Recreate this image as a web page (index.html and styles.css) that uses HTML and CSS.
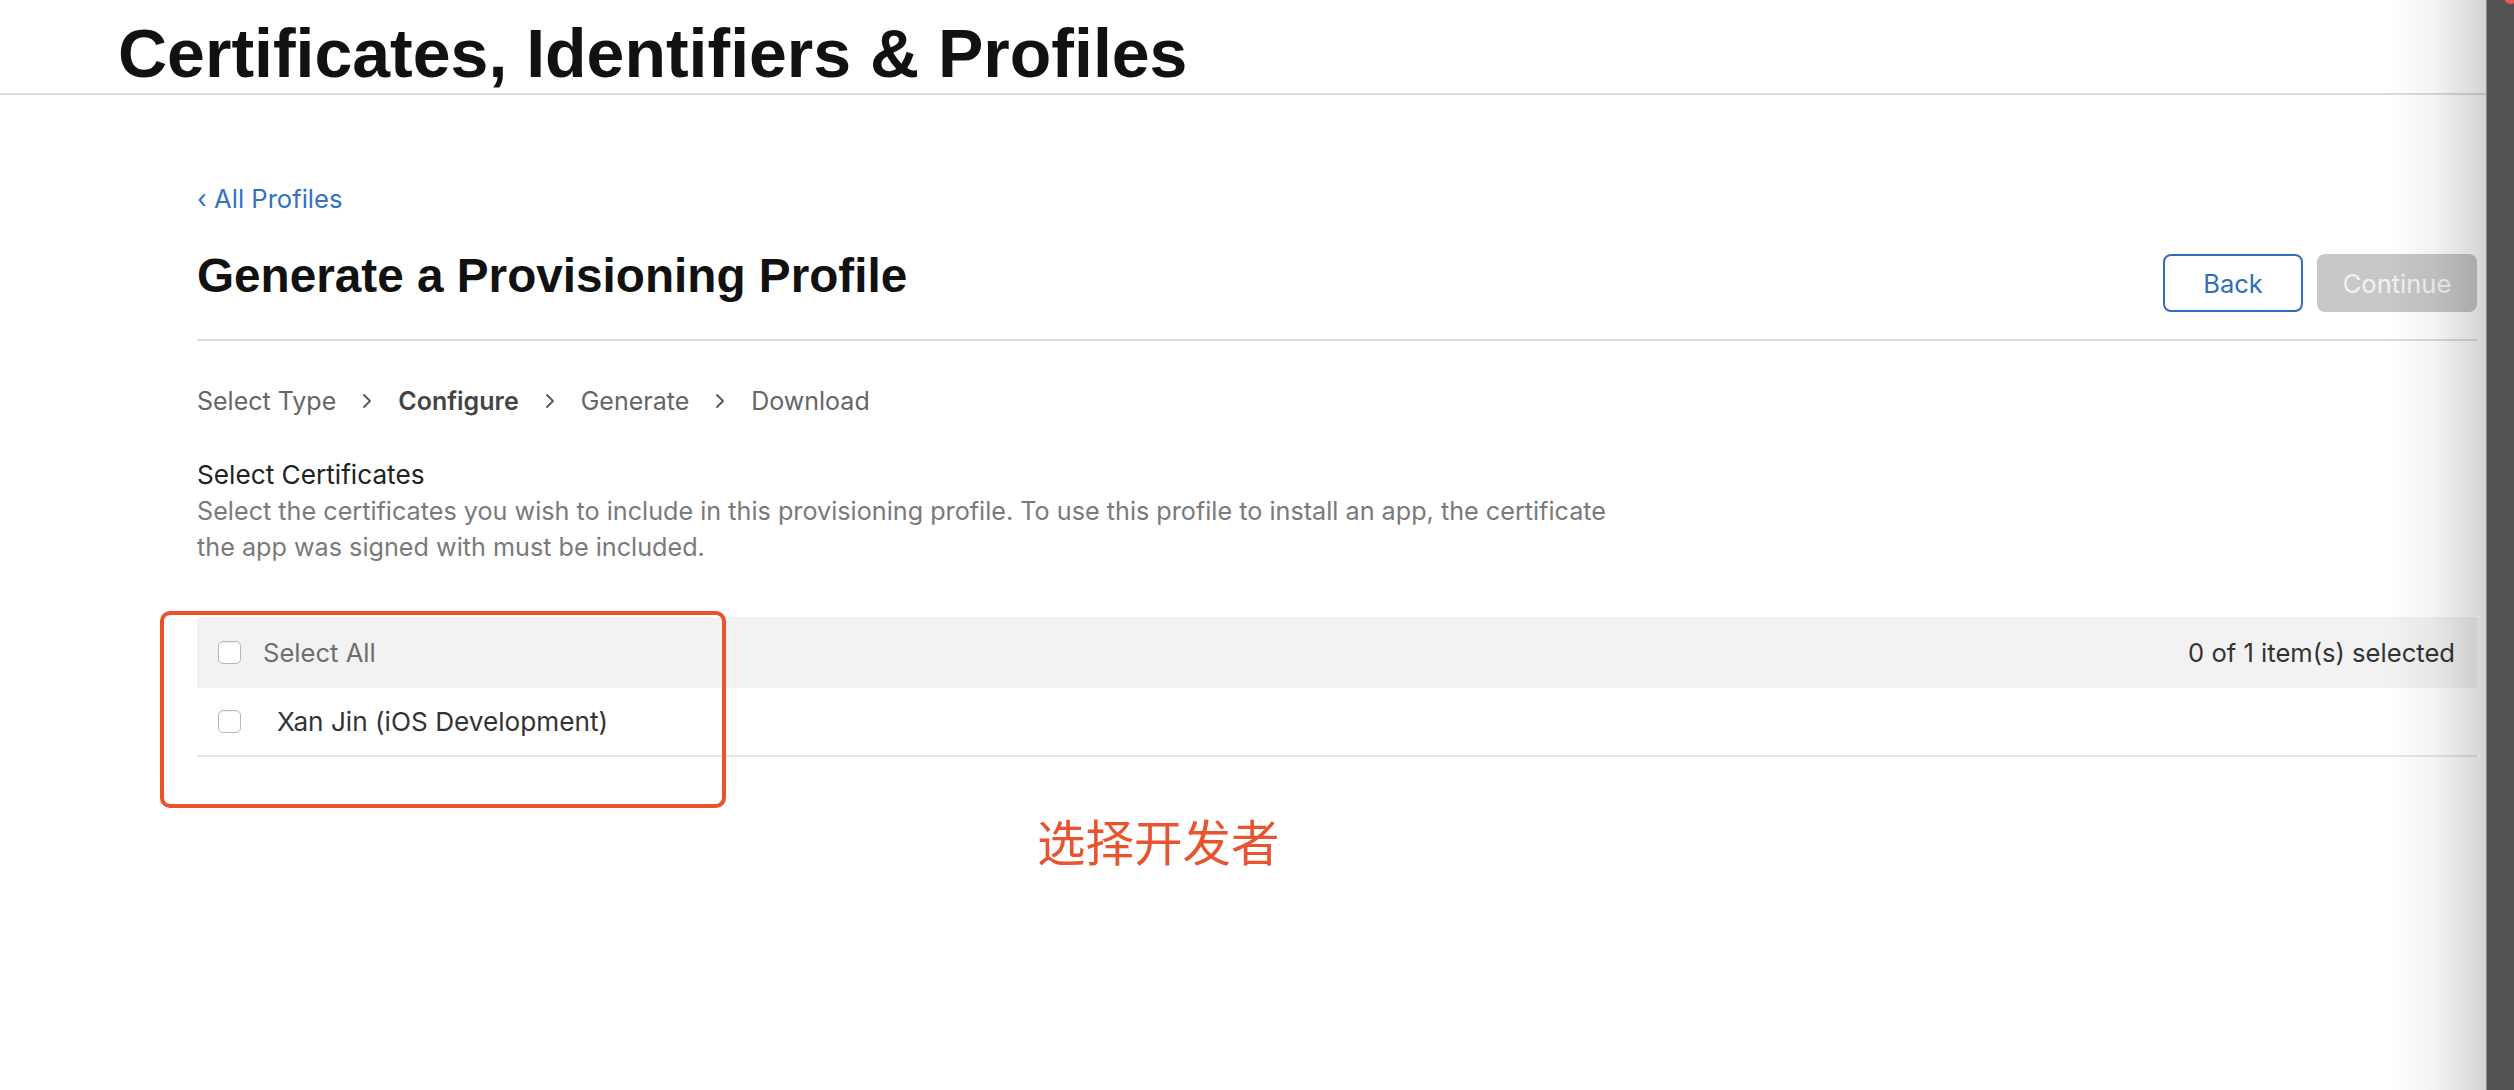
FILE: index.html
```html
<!DOCTYPE html>
<html lang="en">
<head>
<meta charset="utf-8">
<title>Certificates, Identifiers &amp; Profiles</title>
<link rel="stylesheet" href="styles.css">
</head>
<body>
<div class="window">
  <main class="page">
    <header class="site-head">
      <h1 class="site-title">Certificates, Identifiers &amp; Profiles</h1>
    </header>
    <section class="content">
      <a class="back-link" href="#">‹ All Profiles</a>
      <div class="title-row">
        <h2 class="page-title">Generate a Provisioning Profile</h2>
        <div class="actions">
          <button class="btn btn-back">Back</button>
          <button class="btn btn-continue">Continue</button>
        </div>
      </div>
      <nav class="steps">
        <span class="step">Select Type</span>
        <svg class="chev" viewBox="0 0 10 16" width="10" height="16"><path d="M2 2 L8 8 L2 14" fill="none" stroke="#555" stroke-width="1.8" stroke-linecap="round" stroke-linejoin="round"/></svg>
        <span class="step step-current">Configure</span>
        <svg class="chev" viewBox="0 0 10 16" width="10" height="16"><path d="M2 2 L8 8 L2 14" fill="none" stroke="#555" stroke-width="1.8" stroke-linecap="round" stroke-linejoin="round"/></svg>
        <span class="step">Generate</span>
        <svg class="chev" viewBox="0 0 10 16" width="10" height="16"><path d="M2 2 L8 8 L2 14" fill="none" stroke="#555" stroke-width="1.8" stroke-linecap="round" stroke-linejoin="round"/></svg>
        <span class="step">Download</span>
      </nav>
      <div class="section-head">
        <div class="section-title">Select Certificates</div>
        <p class="section-desc">Select the certificates you wish to include in this provisioning profile. To use this profile to install an app, the certificate the app was signed with must be included.</p>
      </div>
      <div class="cert-table">
        <div class="table-head">
          <label class="check-label select-all"><span class="checkbox"></span><span>Select All</span></label>
          <span class="count">0 of 1 item(s) selected</span>
        </div>
        <div class="table-row">
          <label class="check-label item"><span class="checkbox"></span><span>Xan Jin (iOS Development)</span></label>
        </div>
      </div>
    </section>
    <div class="annot-box"></div>
    <div class="annot-text">选择开发者</div>
    <div class="edge-shade"></div>
  </main>
  <aside class="side-dark"><span class="close-dot"></span></aside>
</div>
</body>
</html>
```

FILE: styles.css
```css
html, body {
  margin: 0;
  padding: 0;
  background: #fff;
}
body {
  width: 2514px;
  height: 1090px;
  overflow: hidden;
  font-family: "Inter", "Liberation Sans", sans-serif;
  color: #333;
}
.window {
  display: flex;
  height: 1090px;
}
.page {
  position: relative;
  flex: 1;
  background: #fff;
  overflow: hidden;
}
.side-dark {
  position: relative;
  width: 27px;
  background: #535353;
  border-left: 1px solid #8a8a8a;
}
.close-dot {
  position: absolute;
  top: -10px;
  right: -4px;
  width: 14px;
  height: 14px;
  border-radius: 50%;
  background: #f05a52;
}
.site-head {
  padding: 19px 0 6px 118px;
  border-bottom: 2px solid #dcdcdc;
}
.site-title {
  margin: 0;
  font-family: "Liberation Sans", Arial, sans-serif;
  font-weight: 700;
  font-size: 68px;
  line-height: 68px;
  color: #111;
}
.content {
  padding: 0 9px 0 197px;
}
.back-link {
  display: block;
  margin-top: 88px;
  font-size: 25.6px;
  line-height: 32px;
  color: #3571c0;
  text-decoration: none;
}
.title-row {
  display: flex;
  justify-content: space-between;
  align-items: flex-start;
  margin-top: 32px;
  padding-bottom: 27px;
  border-bottom: 2px solid #dcdcdc;
}
.page-title {
  margin: 0;
  font-family: "Liberation Sans", Arial, sans-serif;
  font-weight: 700;
  font-size: 47.7px;
  line-height: 58px;
  color: #111;
}
.actions {
  display: flex;
  gap: 14px;
  margin-top: 7px;
}
.btn {
  height: 58px;
  border-radius: 8px;
  font-family: "Inter", "Liberation Sans", sans-serif;
  font-size: 25.5px;
  padding: 0;
  cursor: pointer;
}
.btn-back {
  width: 140px;
  background: #fff;
  border: 2px solid #2f6dbd;
  color: #2f6dbd;
}
.btn-continue {
  width: 160px;
  background: #c8c8c8;
  border: 0;
  color: #f2f2f2;
}
.steps {
  display: flex;
  align-items: center;
  gap: 26px;
  margin-top: 44px;
  font-size: 25px;
  line-height: 32px;
  color: #666;
}
.step-current {
  font-weight: 600;
  color: #444;
}
.chev {
  display: block;
}
.section-head {
  margin-top: 40px;
}
.section-title {
  font-size: 26.2px;
  line-height: 36px;
  color: #222;
}
.section-desc {
  margin: 0;
  max-width: 1445px;
  font-size: 25.2px;
  line-height: 36px;
  color: #7a7a7a;
}
.cert-table {
  margin-top: 52px;
}
.table-head {
  display: flex;
  justify-content: space-between;
  align-items: center;
  height: 71px;
  padding: 0 22px 0 21px;
  background: #f2f2f2;
}
.table-row {
  display: flex;
  align-items: center;
  height: 67px;
  padding: 0 21px;
  border-bottom: 2px solid #e6e6e6;
}
.check-label {
  display: flex;
  align-items: center;
  line-height: 32px;
}
.checkbox {
  display: block;
  width: 21px;
  height: 21px;
  border: 1px solid #b8b8b8;
  border-radius: 5px;
  background: #fff;
  box-shadow: inset 0 1px 1px rgba(0,0,0,0.06);
}
.select-all {
  gap: 22px;
  font-size: 25.6px;
  color: #6e6e6e;
}
.item {
  gap: 36px;
  font-size: 26.2px;
  color: #333;
}
.count {
  font-size: 25.6px;
  color: #333;
}
.annot-box {
  position: absolute;
  left: 160px;
  top: 611px;
  width: 558px;
  height: 189px;
  border: 4px solid #e8532d;
  border-radius: 10px;
}
.annot-text {
  position: absolute;
  left: 1037px;
  top: 810px;
  font-family: "Noto Sans CJK SC", sans-serif;
  font-size: 48.5px;
  line-height: 60px;
  color: #e9532d;
}
.edge-shade {
  position: absolute;
  top: 0;
  right: 0;
  width: 100px;
  height: 100%;
  background: linear-gradient(to right, rgba(0,0,0,0), rgba(0,0,0,0.05) 50%, rgba(0,0,0,0.17));
  pointer-events: none;
}
```
